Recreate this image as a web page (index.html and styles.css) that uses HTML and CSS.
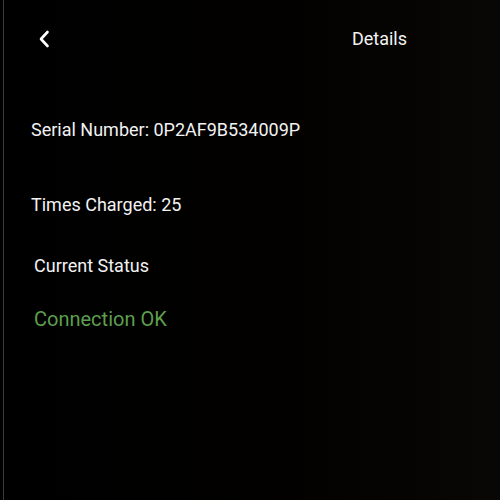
FILE: index.html
```html
<!DOCTYPE html>
<html>
<head>
<meta charset="utf-8">
<title>Details</title>
<link rel="stylesheet" href="styles.css">
</head>
<body>
<div class="screen">
  <div class="topbar">
    <a class="back" href="#">
      <svg width="12" height="18" viewBox="0 0 12 18"><path d="M9.5 2 L3 9 L9.5 16" fill="none" stroke="#fff" stroke-width="2.6" stroke-linecap="round" stroke-linejoin="round"/></svg>
    </a>
    <span class="title">Details</span>
  </div>
  <div class="info">
    <p class="serial">Serial Number: 0P2AF9B534009P</p>
    <p class="charged">Times Charged: 25</p>
  </div>
  <div class="status">
    <p class="label">Current Status</p>
    <p class="state">Connection OK</p>
  </div>
</div>
</body>
</html>
```

FILE: styles.css
```css
html, body {
  margin: 0;
  height: 100%;
  background: #000;
}
body {
  font-family: Roboto, "Liberation Sans", sans-serif;
  color: #f2f2f2;
}
.screen {
  height: 100%;
  box-sizing: border-box;
  border-left: 1px solid #3a3a3a;
  margin-left: 3px;
  background: linear-gradient(to right, #000 0%, #020100 55%, #090705 100%);
}
.topbar {
  display: flex;
  align-items: center;
  justify-content: space-between;
  height: 78px;
  padding: 0 93px 0 34px;
}
.back {
  display: flex;
}
.title {
  font-size: 18px;
  line-height: 24px;
}
.info {
  padding: 40px 0 0 27px;
}
.info p {
  margin: 0;
  font-size: 18px;
  line-height: 24px;
}
.info .charged {
  margin-top: 51px;
}
.status {
  padding: 37px 0 0 30px;
}
.status p {
  margin: 0;
}
.status .label {
  font-size: 18px;
  line-height: 24px;
}
.status .state {
  margin-top: 28px;
  font-size: 20px;
  line-height: 26px;
  color: #5e9e4f;
}
```
